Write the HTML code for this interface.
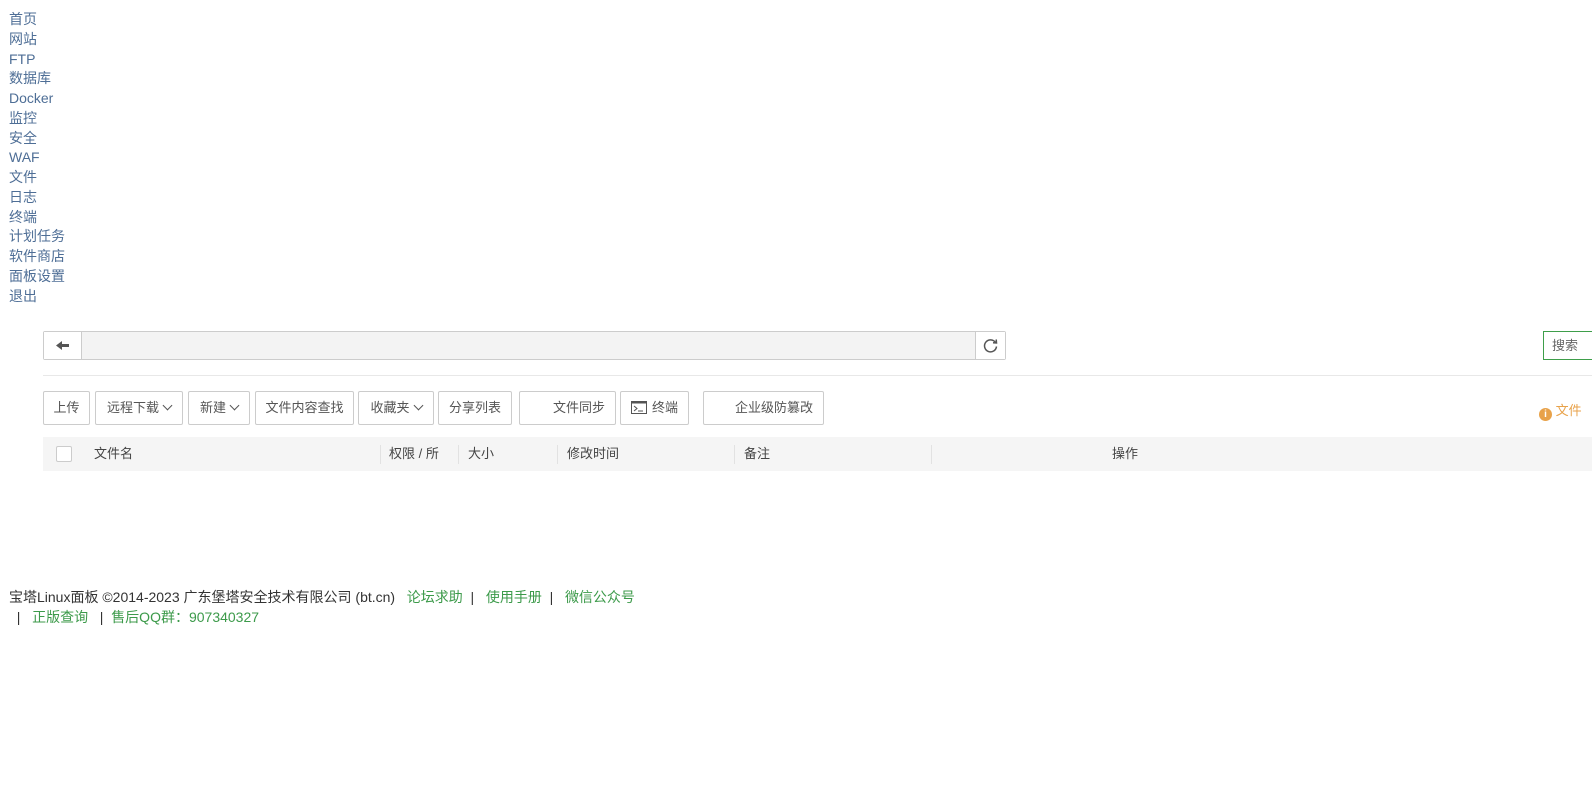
<!DOCTYPE html>
<html><head><meta charset="utf-8"><style>
body{margin:0;background:#fff;font-family:"Liberation Sans","Noto Sans CJK SC",sans-serif;font-size:14px;color:#333;width:1592px;height:791px;overflow:hidden;position:relative}
.nav{position:absolute;left:9px;top:10px;line-height:19.75px;color:#4e6e96;font-size:14px}
.a{position:absolute}
.bar{left:43px;top:331px;width:961px;height:27px;border:1px solid #ccc;background:#f3f3f3;border-radius:2px}
.back{left:0;top:0;width:37px;height:27px;background:#fff;border-right:1px solid #ccc}
.ref{right:0;top:0;width:29px;height:27px;background:#fff;border-left:1px solid #ccc}
.search{left:1543px;top:331px;width:60px;height:27px;border:1px solid #3e9e4a;font-size:13px;color:#666;line-height:27px;padding-left:8px}
.hr{left:43px;top:375px;width:1549px;height:1px;background:#e8e8e8}
.btn{top:391px;height:32px;border:1px solid #ccc;border-radius:2px;background:#fff;font-size:13px;color:#555;line-height:32px;text-align:center;box-sizing:content-box}
.btn .c{display:inline-block;width:6px;height:6px;border-right:1.3px solid #555;border-bottom:1.3px solid #555;transform:rotate(45deg);margin-left:5px;position:relative;top:-3px}
.th{left:43px;top:437px;width:1549px;height:34px;background:#f5f5f5;font-size:13px;color:#444}
.th span{position:absolute;top:0;line-height:34px}
.sep{position:absolute;top:8px;width:1px;height:19px;background:#e2e2e2}
.foot{left:9px;top:588px;line-height:19.5px;font-size:14px;color:#333}
.g{color:#3c9a4a}
</style></head><body>
<div class="nav">首页<br>网站<br>FTP<br>数据库<br>Docker<br>监控<br>安全<br>WAF<br>文件<br>日志<br>终端<br>计划任务<br>软件商店<br>面板设置<br>退出</div>
<div class="a bar">
 <div class="a back"><svg width="37" height="27" viewBox="0 0 37 27"><path d="M12 13.5 L18 9 V12 H25 V15 H18 V18 Z" fill="#555"/></svg></div>
 <div class="a ref"><svg width="29" height="27" viewBox="0 0 29 27"><path d="M19.5 10.5 A6 6 0 1 0 20.5 14.5" fill="none" stroke="#555" stroke-width="1.5"/><path d="M17 10.8 L20.5 11 L20.2 7.5" fill="none" stroke="#555" stroke-width="1.5"/></svg></div>
</div>
<div class="a search">搜索</div>
<div class="a hr"></div>
<div class="a btn" style="left:43px;width:45px">上传</div>
<div class="a btn" style="left:95px;width:86px">远程下载<span class="c"></span></div>
<div class="a btn" style="left:188px;width:60px">新建<span class="c"></span></div>
<div class="a btn" style="left:255px;width:97px">文件内容查找</div>
<div class="a btn" style="left:358px;width:74px">收藏夹<span class="c"></span></div>
<div class="a btn" style="left:438px;width:72px">分享列表</div>
<div class="a btn" style="left:519px;width:95px;text-align:right"><span style="padding-right:10px">文件同步</span></div>
<div class="a btn" style="left:620px;width:67px"><svg width="16" height="13" viewBox="0 0 16 13" style="vertical-align:-2px;margin-right:5px"><rect x="0.5" y="0.5" width="15" height="12" fill="none" stroke="#555"/><rect x="0.5" y="0.5" width="15" height="2" fill="#555"/><path d="M3 5 L6 7.5 L3 10 M7 10 H12" fill="none" stroke="#555"/></svg>终端</div>
<div class="a btn" style="left:703px;width:119px;text-align:right"><span style="padding-right:10px">企业级防篡改</span></div>
<div class="a" style="left:1539px;top:400px;font-size:13px;color:#e8a24a;white-space:nowrap"><span style="display:inline-block;width:13px;height:13px;border-radius:50%;background:#e8a24a;color:#fff;font-size:10px;line-height:13px;text-align:center;font-weight:bold;vertical-align:-2px">i</span> 文件</div>
<div class="a th">
 <span style="left:13px;top:9px;width:14px;height:14px;background:#fff;border:1px solid #ccc;border-radius:2px;line-height:14px"></span>
 <span style="left:51px">文件名</span>
 <div class="sep" style="left:337px"></div><span style="left:346px">权限 / 所</span>
 <div class="sep" style="left:415px"></div><span style="left:425px">大小</span>
 <div class="sep" style="left:514px"></div><span style="left:524px">修改时间</span>
 <div class="sep" style="left:691px"></div><span style="left:701px">备注</span>
 <div class="sep" style="left:888px"></div><span style="left:1069px">操作</span>
</div>
<div class="a foot">宝塔Linux面板 ©2014-2023 广东堡塔安全技术有限公司 (bt.cn) &nbsp;&nbsp;<span class="g">论坛求助</span> &nbsp;| &nbsp;&nbsp;<span class="g">使用手册</span> &nbsp;| &nbsp;&nbsp;<span class="g">微信公众号</span><br>&nbsp;&nbsp;| &nbsp;&nbsp;<span class="g">正版查询</span> &nbsp;&nbsp;| &nbsp;<span class="g">售后QQ群：907340327</span></div>
</body></html>
